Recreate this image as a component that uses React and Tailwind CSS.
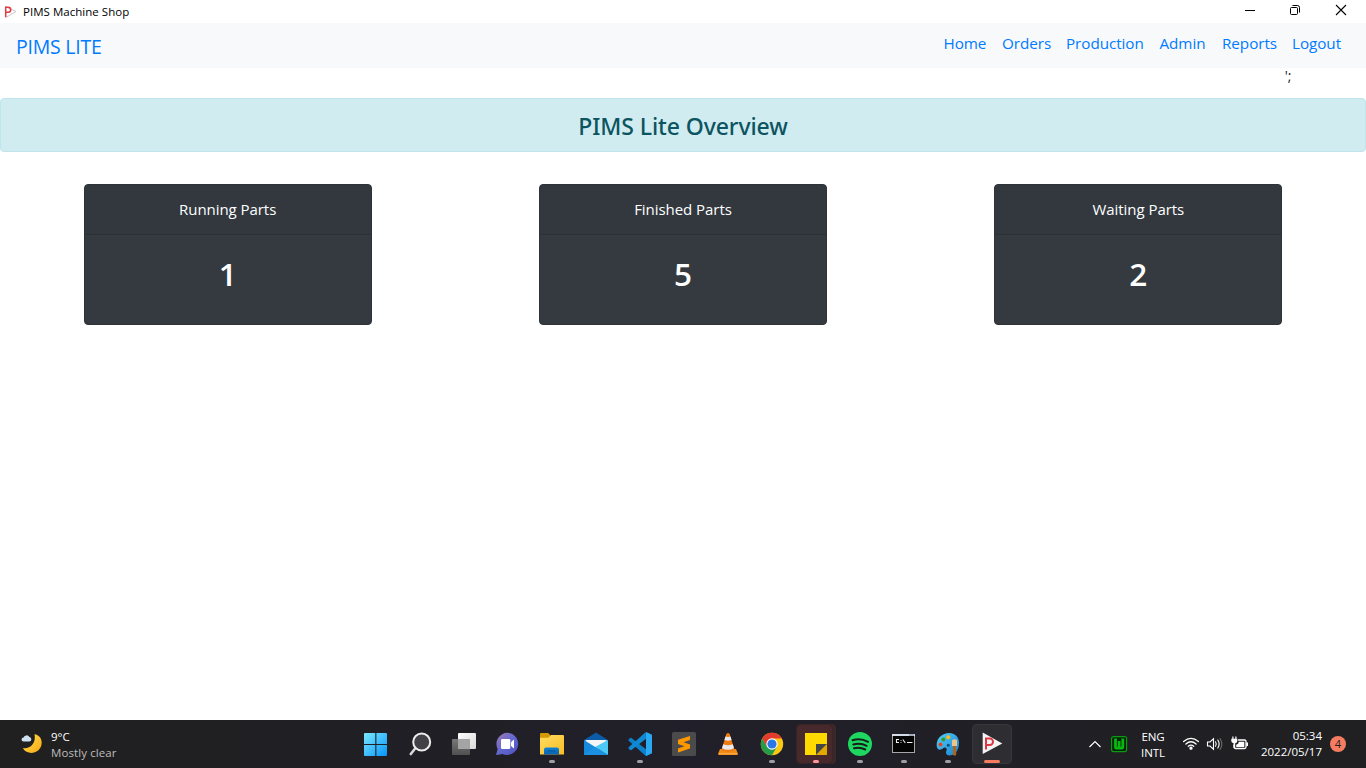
import React from "react";

const links = [
  { label: "Home", cls: "w-[42.5px]" },
  { label: "Orders", cls: "w-[48px]" },
  { label: "Production", cls: "w-[77.5px]" },
  { label: "Admin", cls: "w-[46.5px]" },
  { label: "Reports", cls: "w-[54px]" },
  { label: "Logout", cls: "w-[50px]" },
];

const cards = [
  { title: "Running Parts", value: 1 },
  { title: "Finished Parts", value: 5 },
  { title: "Waiting Parts", value: 2 },
];

function TitleBar() {
  return (
    <header className="flex h-[23px] items-center bg-white text-black">
      <svg className="ml-[4px] h-[14px] w-[13px]" viewBox="0 0 13 14">
        <path d="M1 1.5 L12 6.5 L1 13" fill="none" stroke="#c9c9c9" strokeWidth="1" />
        <path d="M1.7 12 V2.2 H4.2 a2.4 2.4 0 0 1 0 5 H1.7" fill="none" stroke="#e03b42" strokeWidth="1.5" />
      </svg>
      <span className="ml-[6px] flex-1 whitespace-nowrap text-[11.5px] tracking-[0.03px]">PIMS Machine Shop</span>
      <svg className="mr-[19px] h-[23px] w-[104px]" viewBox="0 0 104 23">
        <path d="M2 10.5 H12" stroke="#000" />
        <rect x="47.5" y="7.5" width="7" height="7" rx="1" fill="none" stroke="#000" />
        <path d="M49.5 5.5 H54.5 a2 2 0 0 1 2 2 V12.5" fill="none" stroke="#000" />
        <path d="M93 5 L103 15 M103 5 L93 15" stroke="#000" strokeWidth="1.1" />
      </svg>
    </header>
  );
}

function Card({ title, value }) {
  return (
    <section className="h-[141px] w-[288px] overflow-hidden rounded-[4px] border border-[#2e3338] bg-[#343a40] text-center text-white">
      <h2 className="h-[50px] border-b border-[#2c3136] bg-[#32383e] text-[15px] leading-[49px] tracking-[-0.05px]">{title}</h2>
      <p className="pt-[19px] text-[31.5px] font-semibold leading-[40px]">{value}</p>
    </section>
  );
}

function Cell({ children, dot = "" }) {
  return (
    <svg className="h-[48px] w-[44px] shrink-0" viewBox="0 0 44 48">
      {children}
      {dot && <rect x="19" y="40" width="6" height="3" rx="1.5" fill={dot} />}
    </svg>
  );
}

function Apps() {
  return (
    <div className="flex w-[660px]">
      <Cell>
        <defs>
          <linearGradient id="win" gradientUnits="userSpaceOnUse" x1="10" y1="13" x2="33" y2="36">
            <stop stopColor="#7beaff" /><stop offset="1" stopColor="#0794fb" />
          </linearGradient>
        </defs>
        <path d="M11 13 H21.3 V24 H10 V14 a1 1 0 0 1 1 -1z M22.4 13 H32 a1 1 0 0 1 1 1 V24 H22.4z M10 25.1 H21.3 V36 H11 a1 1 0 0 1 -1 -1z M22.4 25.1 H33 V35 a1 1 0 0 1 -1 1 H22.4z" fill="url(#win)" />
      </Cell>
      <Cell>
        <path d="M17.5 28 L12.8 34" stroke="#d9d9d9" strokeWidth="2.6" strokeLinecap="round" />
        <circle cx="23.7" cy="22" r="8.5" fill="#414147" stroke="#ededed" strokeWidth="2" />
      </Cell>
      <Cell>
        <defs>
          <linearGradient id="tw" x1="0" y1="0" x2="1" y2="1"><stop stopColor="#fff" /><stop offset="1" stopColor="#d8d8d8" /></linearGradient>
          <linearGradient id="tg" x1="0" y1="0" x2="0" y2="1"><stop stopColor="#777" /><stop offset="1" stopColor="#505050" /></linearGradient>
        </defs>
        <rect x="16" y="13" width="18" height="16" rx="1" fill="url(#tw)" />
        <rect x="10" y="19" width="18" height="16" rx="1" fill="url(#tg)" />
        <rect x="16" y="19" width="12" height="10" fill="#a4a4a4" />
      </Cell>
      <Cell>
        <defs><linearGradient id="chat" x1="0" y1="0" x2="1" y2="1"><stop stopColor="#a47ab2" /><stop offset=".5" stopColor="#6267cf" /><stop offset="1" stopColor="#4d52c0" /></linearGradient></defs>
        <path d="M21.7 12.8 a11.1 11.1 0 1 1 -5.2 21.2 L11 35 Q10 35 10.3 34 L11.7 29 A11.1 11.1 0 0 1 21.7 12.8z" fill="url(#chat)" />
        <rect x="15" y="19" width="9.3" height="10" rx="1.3" fill="#fff" />
        <path d="M25 22.3 L27.2 20 Q28 19.4 28 20.5 V27.5 Q28 28.6 27.2 28 L25 25.7z" fill="#fff" />
      </Cell>
      <Cell dot="#a0a0a3">
        <defs>
          <linearGradient id="folder" x1="0" y1="0" x2="1" y2="1"><stop stopColor="#ffdc62" /><stop offset="1" stopColor="#f9bd25" /></linearGradient>
          <linearGradient id="fb" x1="0" y1="0" x2="0" y2="1"><stop stopColor="#0e82d6" /><stop offset="1" stopColor="#0b62ae" /></linearGradient>
        </defs>
        <path d="M10 14 Q10 13 11 13 H18 L20.3 15 V18 H10z" fill="#d39a05" />
        <path d="M10 17.8 H18.3 L21 15 H33 Q34 15 34 16 V34.5 H10z" fill="url(#folder)" />
        <path d="M14 34.5 V29.5 Q14 27.5 16 27.5 H27 Q29 27.5 29 29.5 V34.5z" fill="url(#fb)" />
        <path d="M17.5 31 H25.5" stroke="#0858a1" strokeWidth="1.3" />
      </Cell>
      <Cell>
        <path d="M10 20 L22 12.5 L34 20 V25 H10z" fill="#0b5ba8" />
        <path d="M11.5 20 H32.5 V24 L22 30 L11.5 24z" fill="#f5f5f5" />
        <path d="M10 20 L34 35 H10z" fill="#168bdd" />
        <path d="M34 20 L21 27 L34 35z" fill="#4cc9f5" />
        <path d="M10 35 L21.5 27 L34 35z" fill="#1d91e1" />
      </Cell>
      <Cell dot="#a0a0a3">
        <path d="M27.8 12 L34 14.8 V33.2 L27.8 36 L10.7 20.7 Q10.1 20 10.7 19.3 L12.2 18 Q12.9 17.5 13.5 18 L28 29.3 V12z" fill="#0d80cb" />
        <path d="M27.8 12 L10.7 27.3 Q10.1 28 10.7 28.7 L12.2 30 Q12.9 30.5 13.5 30 L28 18.8z" fill="#1089d4" />
        <path d="M28 12 L33.2 14.4 Q34 14.8 34 15.6 V32.4 Q34 33.2 33.2 33.6 L28 36z" fill="#2aa9f2" />
      </Cell>
      <Cell>
        <rect x="10" y="12" width="24" height="24" rx="1.5" fill="#4b4b4b" />
        <path d="M28 16 V20 L21.5 22.2 L28 24.4 V28.6 L16 32.4 V28.6 L22.5 26.3 L16 24 V19.7z" fill="#ff9800" />
      </Cell>
      <Cell>
        <path d="M14 29 H30 L32 34 Q32 35 31 35 H13 Q12 35 12 34z" fill="#f28a17" />
        <path d="M20.3 14 Q22 12 23.7 14 L28.5 30 Q22 33.5 15.5 30z" fill="#ee7b11" />
        <path d="M19.5 16.5 Q22 17.4 24.5 16.5 L25.6 20 Q22 21.5 18.4 20z M17.2 24.2 Q22 26.5 26.8 24.2 L28 28.2 Q22 31.5 16 28.2z" fill="#e9e9ee" />
        <path d="M13 33.7 H31" stroke="#ffbd58" strokeWidth=".8" />
      </Cell>
      <Cell dot="#a0a0a3">
        <circle cx="22" cy="24" r="11.2" fill="#fbc814" />
        <path d="M12.3 18.4 A11.2 11.2 0 0 0 22 35.2 L26.9 26.8 L17.1 26.8z" fill="#249a4b" />
        <path d="M22 18.4 H31.7 A11.2 11.2 0 0 0 12.3 18.4 L17.1 26.8z" fill="#e33b2e" />
        <circle cx="22" cy="24" r="5.7" fill="#fff" />
        <circle cx="22" cy="24" r="4.6" fill="#2877e8" />
      </Cell>
      <Cell dot="#ff969e">
        <rect x="4" y="4" width="38" height="40" rx="4" fill="#3b2629" />
        <rect x="2.5" y="4.5" width="36" height="39" rx="4" fill="#47282b" stroke="#382328" />
        <path d="M11 13 H33 V24 L22 35 H11z" fill="#ffd900" />
        <path d="M22 24 H33 L22 35z" fill="#454545" />
        <path d="M33 24 V35 H22z" fill="#e0a900" />
      </Cell>
      <Cell dot="#a0a0a3">
        <circle cx="22" cy="24" r="12" fill="#1ed760" />
        <path d="M14.5 20.3 Q22.5 17.7 30 21.8 M15.3 24.5 Q22.4 22.4 28.6 25.8 M16 28.3 Q22 26.7 27.2 29.5" fill="none" stroke="#171d19" strokeWidth="2" strokeLinecap="round" />
      </Cell>
      <Cell dot="#a0a0a3">
        <rect x="10.5" y="14.5" width="22" height="18" fill="#050505" stroke="#a6a6a6" />
        <path d="M10 15 H33" stroke="#d5dbe4" strokeWidth="2" />
        <path d="M27 15 H32" stroke="#6e7f9c" strokeWidth="1" />
        <path d="M17 19.5 H14.5 V22.5 H17 M19 20 V20.8 M19 22 V22.8 M20.8 19.5 L23.3 23 M25 22.5 H30.5" fill="none" stroke="#eee" strokeWidth="1.1" />
      </Cell>
      <Cell dot="#a0a0a3">
        <defs><linearGradient id="paint" x1="0" y1="0" x2="1" y2="1"><stop stopColor="#55d0fa" /><stop offset="1" stopColor="#1681d2" /></linearGradient></defs>
        <path d="M10.7 26 C10 18 17 13 23 13 C30 13 33.5 18 33 24 C32.8 31 28 35.5 23.5 35.5 C20 35.5 19.5 32.5 20.5 30.5 C21.5 28 19 26.7 17 28.2 C14 31 11 29.5 10.7 26z" fill="url(#paint)" />
        <circle cx="14.5" cy="24.5" r="2" fill="#df4822" />
        <circle cx="17.3" cy="19.5" r="2" fill="#359b28" />
        <circle cx="22.3" cy="17.3" r="2" fill="#fbbd16" />
        <circle cx="22.3" cy="25.3" r="1.5" fill="#075086" />
        <path d="M27 26 H30.2 V34.5 Q28.6 37 27 34.5z" fill="#ad651b" />
        <path d="M26 20.5 Q28 18.5 31 20 V26 H26z" fill="#edc58a" />
      </Cell>
      <Cell>
        <rect x="2.5" y="4.5" width="39" height="39" rx="4" fill="#2d2d32" stroke="#36363b" />
        <path d="M12.7 12.5 L32.3 23.6 L12.7 34z" fill="#f5f5f5" />
        <path d="M16 29.5 V18.5 H19.7 a3.2 3.2 0 0 1 0 6.6 H16" fill="none" stroke="#df3842" strokeWidth="2" />
        <rect x="14" y="40" width="16" height="3" rx="1.5" fill="#f57c60" />
      </Cell>
    </div>
  );
}

function Weather() {
  return (
    <div className="flex w-[354px] items-center text-[11.5px] leading-[16px]">
      <svg className="ml-[20px] h-[24px] w-[24px]" viewBox="0 0 24 24">
        <defs><linearGradient id="moon" x1="0" y1="0" x2="1" y2="1"><stop stopColor="#ffe84c" /><stop offset="1" stopColor="#fba414" /></linearGradient></defs>
        <path d="M14.5 2.2 C21 3 23.5 10 20.5 15.5 C16.5 22.8 6.5 22.5 2.7 16 C9 17.5 16.5 12 14.5 2.2z" fill="url(#moon)" />
        <path d="M3.5 9.5 a2 2 0 0 1 .1 -4 a3.2 3.2 0 0 1 5.8 -.5 a2.3 2.3 0 0 1 .2 4.5z" fill="#cfe1ef" />
      </svg>
      <div className="ml-[7px] pt-[2px]">
        <div className="text-white">9°C</div>
        <div className="whitespace-nowrap tracking-[0.1px] text-[#bdbdbd]">Mostly clear</div>
      </div>
    </div>
  );
}

function Tray() {
  return (
    <div className="flex flex-1 items-center text-[11.5px] leading-[16px] text-white">
      <svg className="ml-[72px] h-[48px] w-[48px] shrink-0" viewBox="0 0 48 48">
        <path d="M3.5 27 L9 21.5 L14.5 27" fill="none" stroke="#fff" strokeWidth="1.2" />
        <rect x="25.6" y="16.6" width="15" height="15" rx="2" fill="#05220a" stroke="#0b9c10" strokeWidth="1.2" />
        <path d="M29.5 18.5 V27 Q29.5 28.2 31 28.2 H35 Q36.8 28.2 36.8 27 V18.5 M33.1 21 V27" fill="none" stroke="#08b80e" strokeWidth="2.8" />
      </svg>
      <div className="ml-[3px] w-[32px] whitespace-nowrap pt-[2px] text-center tracking-[-0.1px]">ENG<br />INTL</div>
      <svg className="ml-[11px] h-[48px] w-[72px] shrink-0" viewBox="0 0 72 48">
        <g fill="none" stroke="#fff" strokeWidth="1.3" strokeLinecap="round">
          <path d="M3.6 21.5 Q11 15.2 18.4 21.5 M5.9 24 Q11 19.6 16.1 24 M8.3 26.3 Q11 24 13.7 26.3" />
          <circle cx="11" cy="28.2" r="1" fill="#fff" />
          <path d="M27.5 22 H30 L33.5 18.8 V29.2 L30 26 H27.5z M35.5 21.8 Q37 24 35.5 26.2 M37.8 20 Q40.5 24 37.8 28" strokeWidth="1.1" />
          <path d="M40 18.5 Q43.7 24 40 29.5" stroke="#6a6a6a" strokeWidth="1.1" />
          <path d="M58.5 20 H64.5 Q66 20 66 21.5 V27 Q66 28.5 64.5 28.5 H55.5 Q54 28.5 54 27 V25" />
        </g>
        <path d="M51.3 18.7 H57.3 V21 Q57.3 23 55.2 23.2 V28 H53.6 V23.2 Q51.3 23 51.3 21z M52.3 16.5 H53.5 V19 H52.3z M55.3 16.5 H56.5 V19 H55.3z M58.8 21.7 H64.3 V26.9 H56.2 V24.8 Q58.8 24 58.8 21.7z M66.3 22.5 H68 V26 H66.3z" fill="#fff" />
      </svg>
      <div className="ml-[2px] w-[68px] whitespace-nowrap text-right">05:34<br />2022/05/17</div>
      <span className="ml-[8px] flex h-[16px] w-[16px] items-center justify-center rounded-full bg-[#f57c60] text-[11px] text-[#222]">4</span>
    </div>
  );
}

export default function App() {
  return (
    <div className="flex h-[768px] w-[1366px] flex-col overflow-hidden bg-white font-['Open_Sans','Noto_Sans',sans-serif]">
      <TitleBar />
      <nav className="flex h-[45px] justify-between bg-[#f8f9fb] pl-[16px] pr-[24px] text-[#007bff]">
        <a className="pt-[9px] text-[19.5px] leading-[30px] tracking-[-0.22px]">PIMS LITE</a>
        <div className="flex gap-[16px] pt-[8px] text-[15.25px] leading-[24px] tracking-[-0.06px]">
          {links.map((l) => (
            <a key={l.label} className={`whitespace-nowrap ${l.cls}`}>{l.label}</a>
          ))}
        </div>
      </nav>
      <main className="flex flex-1 flex-col">
        <div className="h-[30px] pr-[74.5px] text-right text-[14px] leading-[16px] text-[#212529]">';</div>
        <h1 className="h-[54px] rounded-[4px] border border-[#bee5eb] bg-[#d1ecf1] text-center font-['Noto_Sans','Open_Sans',sans-serif] text-[23px] font-medium leading-[55px] tracking-[-0.1px] text-[#0c5460]">
          PIMS Lite Overview
        </h1>
        <div className="mt-[32px] grid grid-cols-3 justify-items-center">
          {cards.map((c) => <Card key={c.title} {...c} />)}
        </div>
      </main>
      <footer className="flex h-[48px] bg-linear-to-r from-[#202020] via-[#211f29] to-[#202022]">
        <Weather />
        <Apps />
        <Tray />
      </footer>
    </div>
  );
}
